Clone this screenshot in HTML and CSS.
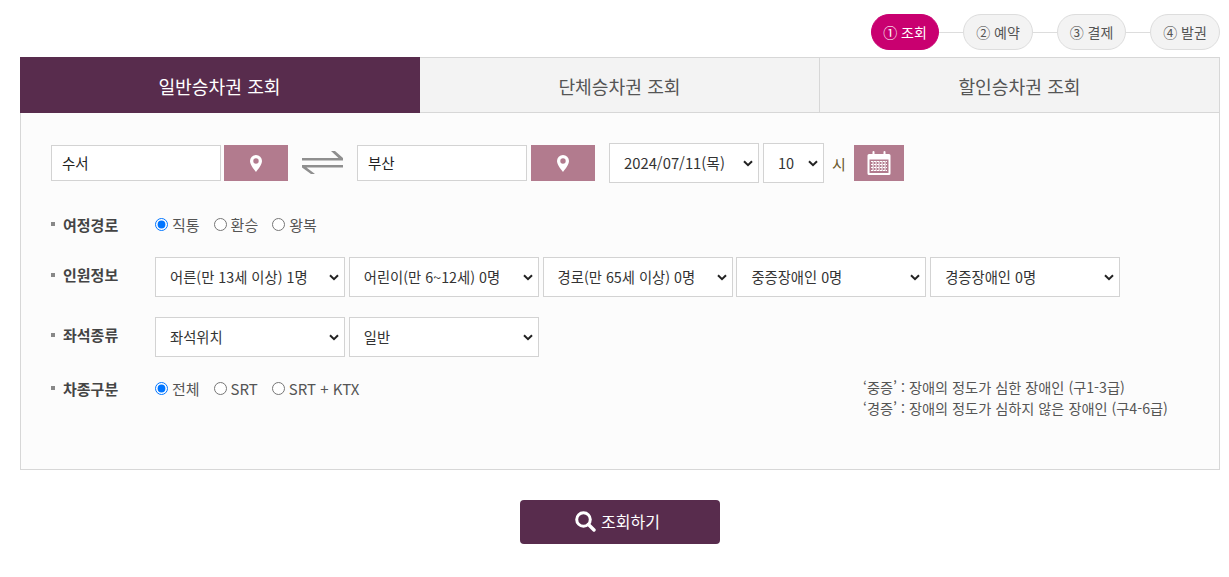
FILE: index.html
```html
<!DOCTYPE html>
<html lang="ko">
<head>
<meta charset="utf-8">
<title>승차권 조회</title>
<link rel="stylesheet" href="styles.css">
</head>
<body>
<div class="page">
  <ol class="steps">
    <li class="step first active">① 조회</li>
    <li class="step-line"></li>
    <li class="step">② 예약</li>
    <li class="step-line"></li>
    <li class="step third">③ 결제</li>
    <li class="step-line"></li>
    <li class="step">④ 발권</li>
  </ol>
  <div class="tabs">
    <div class="tab active">일반승차권 조회</div>
    <div class="tab">단체승차권 조회</div>
    <div class="tab">할인승차권 조회</div>
  </div>
  <div class="panel">
    <div class="route">
      <input class="station" value="수서">
      <button class="icon-btn pin-btn" aria-label="출발역">
        <svg width="12" height="17" viewBox="0 0 12 17"><path fill="#fff" fill-rule="evenodd" d="M6 0a6 6 0 0 1 6 6c0 3.2-3.7 8.200-6 11C3.700 14.200 0 9.200 0 6a6 6 0 0 1 6-6zm0 3.300a2.700 2.700 0 1 0 0 5.400 2.700 2.700 0 0 0 0-5.400z"/></svg>
      </button>
      <svg class="swap" width="41" height="24" viewBox="0 0 41 24"><path fill="#8f8f8f" d="M0 7h41v2.500H0zM29 0h4l8 7h-4.500zM0 14h41v2.500H0zM0 16.500h4.500L13 23H9z"/></svg>
      <input class="station" value="부산">
      <button class="icon-btn pin-btn second" aria-label="도착역">
        <svg width="12" height="17" viewBox="0 0 12 17"><path fill="#fff" fill-rule="evenodd" d="M6 0a6 6 0 0 1 6 6c0 3.2-3.7 8.200-6 11C3.700 14.200 0 9.200 0 6a6 6 0 0 1 6-6zm0 3.300a2.700 2.700 0 1 0 0 5.400 2.700 2.700 0 0 0 0-5.400z"/></svg>
      </button>
      <select class="sel date"><option>2024/07/11(목)</option></select>
      <select class="sel hour"><option>10</option></select>
      <span class="hour-label">시</span>
      <button class="icon-btn cal-btn" aria-label="달력">
        <svg width="24" height="24" viewBox="0 0 24 24">
          <path fill="#fff" fill-rule="evenodd" d="M2 3h20a1.500 1.500 0 0 1 1.500 1.500v18A1.500 1.500 0 0 1 22 24H2a1.500 1.500 0 0 1-1.500-1.500v-18A1.500 1.500 0 0 1 2 3zm.5 5.500V22h19V8.500z"/>
          <rect x="5.500" y="0" width="2" height="5" rx="1" fill="#fff"/>
          <rect x="16.500" y="0" width="2" height="5" rx="1" fill="#fff"/>
          <path stroke="#fff" stroke-width="1" fill="none" stroke-dasharray="2 1" d="M4 10.500h16M4 13.500h16M4 16.500h16M4 19.500h16"/>
          <path stroke="#fff" stroke-width="1" fill="none" d="M6 10v10M9 10v10M12 10v10M15 10v10M18 10v10"/>
        </svg>
      </button>
    </div>

    <div class="row radios-row trip">
      <div class="label">여정경로</div>
      <label class="radio"><input type="radio" name="trip" checked>직통</label>
      <label class="radio"><input type="radio" name="trip">환승</label>
      <label class="radio"><input type="radio" name="trip">왕복</label>
    </div>

    <div class="row people">
      <div class="label">인원정보</div>
      <div class="selects">
        <select class="sel wide"><option>어른(만 13세 이상) 1명</option></select>
        <select class="sel wide"><option>어린이(만 6~12세) 0명</option></select>
        <select class="sel wide"><option>경로(만 65세 이상) 0명</option></select>
        <select class="sel wide"><option>중증장애인 0명</option></select>
        <select class="sel wide"><option>경증장애인 0명</option></select>
      </div>
    </div>

    <div class="row seats">
      <div class="label">좌석종류</div>
      <div class="selects">
        <select class="sel wide"><option>좌석위치</option></select>
        <select class="sel wide"><option>일반</option></select>
      </div>
    </div>

    <div class="row radios-row vehicle">
      <div class="label">차종구분</div>
      <label class="radio"><input type="radio" name="car" checked>전체</label>
      <label class="radio"><input type="radio" name="car">SRT</label>
      <label class="radio"><input type="radio" name="car">SRT + KTX</label>
      <div class="note">
        <p>‘중증’ : 장애의 정도가 심한 장애인 (구1-3급)</p>
        <p>‘경증’ : 장애의 정도가 심하지 않은 장애인 (구4-6급)</p>
      </div>
    </div>
  </div>
  <div class="actions">
    <button class="search">
      <svg width="21" height="21" viewBox="0 0 21 21"><circle cx="8.500" cy="8.500" r="6.800" fill="none" stroke="#fff" stroke-width="3"/><path d="M13.500 13.500l5.500 5.500" stroke="#fff" stroke-width="3.400" stroke-linecap="round"/></svg>
      조회하기
    </button>
  </div>
</div>
</body>
</html>
```
FILE: styles.css
```css
* { box-sizing: border-box; }
html, body { margin: 0; padding: 0; background: #fff; }
body {
  font-family: "Noto Sans CJK KR", "Noto Sans", sans-serif;
  font-size: 14px;
  color: #444;
  overflow: hidden;
}
.page { width: 1200px; margin-left: 20px; padding-top: 14px; }

.steps {
  display: flex;
  justify-content: flex-end;
  align-items: center;
  list-style: none;
  margin: 0 0 7px;
  padding: 0;
  height: 36px;
}
.step {
  width: 70px;
  height: 36px;
  display: flex;
  align-items: center;
  justify-content: center;
  border: 1px solid #ddd;
  border-radius: 18px;
  background: #f3f3f3;
  font-size: 14px;
  line-height: 1;
  padding-bottom: 1px;
  color: #555;
}
.step.first { width: 68px; }
.step.third { width: 69px; }
.step.active { background: #c90070; border-color: #c90070; color: #fff; }
.step-line { width: 24px; height: 1px; background: #ddd; }

.tabs { display: flex; height: 56px; }
.tab {
  width: 400px;
  display: flex;
  align-items: center;
  justify-content: center;
  padding-top: 1px;
  font-size: 18.200px;
  color: #555;
  background: #f3f3f3;
  border-top: 1px solid #d7d7d7;
  border-right: 1px solid #d7d7d7;
  border-bottom: 1px solid #d7d7d7;
}
.tab.active { background: #582c4d; border-color: #582c4d; color: #fff; }

.panel {
  height: 357px;
  border: 1px solid #d7d7d7;
  border-top: 0;
  background: #fcfcfc;
  padding: 30px 30px 0;
}

.route { display: flex; align-items: center; height: 40px; }
.station {
  width: 170px;
  height: 36px;
  border: 1px solid #d3d3d3;
  background: #fff;
  padding: 0 10px 2px;
  font: inherit;
  font-size: 14.500px;
  color: #222;
  outline: 0;
  border-radius: 0;
}
.icon-btn {
  display: flex;
  align-items: center;
  justify-content: center;
  height: 36px;
  border: 0;
  padding: 0;
  background: #b27b8e;
}
.pin-btn { width: 64px; margin-left: 3px; }
.pin-btn.second { margin-left: 4px; margin-right: 14px; }
.swap { margin: 0 14px; }
.cal-btn { width: 50px; margin-left: 9px; }

.sel {
  appearance: none;
  height: 40px;
  border: 1px solid #d3d3d3;
  border-radius: 0;
  background-color: #fff;
  background-image: url("data:image/svg+xml,%3Csvg xmlns='http://www.w3.org/2000/svg' width='10' height='7' viewBox='0 0 10 7'%3E%3Cpath d='M1 1.200l4 4 4-4' fill='none' stroke='%23222' stroke-width='2'/%3E%3C/svg%3E");
  background-repeat: no-repeat;
  background-position: right 5px center;
  font-family: inherit;
  font-size: 14px;
  color: #333;
  padding: 0 18px 2px 14px;
}
.date { width: 150px; font-size: 14.800px; }
.hour { width: 61px; margin-left: 4px; font-size: 14.500px; }
.hour-label { margin-left: 8px; width: 13px; font-size: 15px; color: #6b5a2c; }

.row { display: flex; }
.label {
  width: 104px;
  padding-left: 12px;
  flex: none;
  font-size: 15px;
  font-weight: 700;
  color: #444;
  position: relative;
}
.label::before {
  content: "";
  position: absolute;
  left: 0;
  top: 50%;
  width: 4px;
  height: 4px;
  margin-top: -2px;
  background: #888;
}
.radios-row { align-items: center; height: 20px; }
.trip { margin-top: 31px; }
.people { margin-top: 23px; height: 40px; }
.seats { margin-top: 20px; height: 40px; }
.people .label, .seats .label { height: 36px; line-height: 36px; }
.vehicle { margin-top: 21px; }

.selects { display: flex; gap: 3.800px; }
.wide { width: 190px; font-size: 14.300px; }

.radio { display: flex; align-items: center; margin-right: 14px; font-size: 15px; color: #555; }
.radio input { width: 13px; height: 13px; margin: 1px 4px 0 0; }

.note {
  margin-left: auto;
  margin-right: 19px;
  margin-top: -1px;
  align-self: flex-start;
  font-size: 14.200px;
  line-height: 21px;
  color: #555;
  width: 307px;
}
.note p { margin: 0; white-space: nowrap; }

.actions { display: flex; justify-content: center; margin-top: 30px; }
.search {
  width: 200px;
  height: 44px;
  display: flex;
  align-items: center;
  justify-content: center;
  gap: 5px;
  border: 0;
  border-radius: 4px;
  background: #582c4d;
  color: #fff;
  font-family: inherit;
  font-size: 16px;
  padding: 0 5px 2px 0;
}
```
